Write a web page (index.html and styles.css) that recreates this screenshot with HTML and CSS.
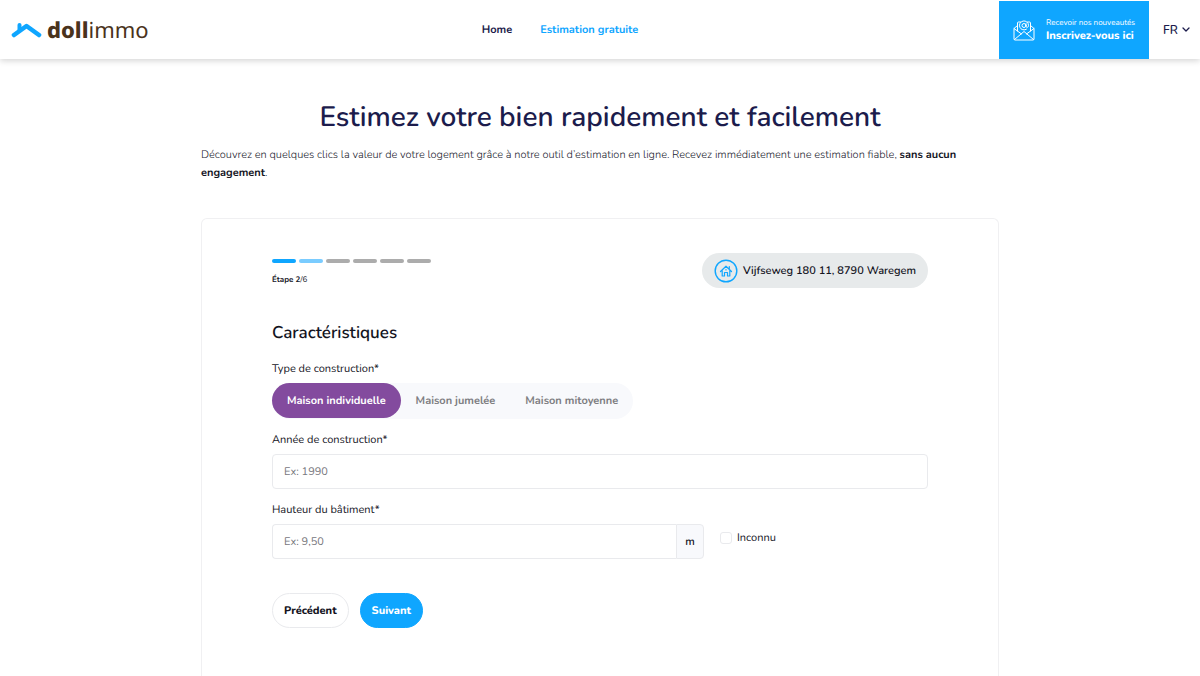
FILE: index.html
```html
<!DOCTYPE html>
<html lang="fr">
<head>
<meta charset="utf-8">
<meta name="viewport" content="width=device-width, initial-scale=1">
<title>Dollimmo – Estimation gratuite</title>
<link rel="stylesheet" href="styles.css">
</head>
<body>
<header class="header">
  <a class="logo" href="#" aria-label="dollimmo">
    <svg class="logo-mark" viewBox="0 0 32 18" aria-hidden="true"><path d="M3 14 15.500 5 28 14" fill="none" stroke="#0fa6ff" stroke-width="4.600" stroke-linecap="round" stroke-linejoin="round"/><path d="M6.500 10V4Q6.500 2 8.500 2Q10.500 2 10.500 4V8Z" fill="#0fa6ff"/></svg>
    <span class="logo-text"><b>doll</b>immo</span>
  </a>
  <nav class="nav">
    <a class="nav-link" href="#">Home</a>
    <a class="nav-link nav-link-active" href="#">Estimation gratuite</a>
  </nav>
  <div class="header-end">
    <a class="newsletter" href="#">
      <svg class="newsletter-icon" viewBox="0 0 22 22" aria-hidden="true" fill="none" stroke="#fff" stroke-width="1" stroke-linecap="round" stroke-linejoin="round"><path d="M4.500 6.500 1 9.500V20a1 1 0 0 0 1 1h18a1 1 0 0 0 1-1V9.500l-3.500-3M4.500 12V4a1 1 0 0 1 1-1h2M17.500 12V4a1 1 0 0 0-1-1h-2M1 9.500l7.500 5.500M21 9.500 13.500 15M1.500 20.500 11 12.500l9.500 8"/><path d="M13.500 10.200A4.500 4.500 0 1 1 15.500 6.500c0 2.300-2.500 2.500-2.500.5V4.700"/><circle cx="11" cy="6.500" r="2"/></svg>
      <span class="newsletter-text"><span class="newsletter-small">Recevoir nos nouveautés</span><strong class="newsletter-strong">Inscrivez-vous ici</strong></span>
    </a>
    <div class="lang">
      <select class="lang-select" aria-label="Langue"><option>FR</option></select>
      <svg class="lang-chevron" viewBox="0 0 8 6" aria-hidden="true"><path d="m1 1 3 3 3-3" fill="none" stroke="#1c1c4c" stroke-width="1.300" stroke-linecap="round" stroke-linejoin="round"/></svg>
    </div>
  </div>
</header>
<main class="main">
  <h1 class="title">Estimez votre bien rapidement et facilement</h1>
  <p class="intro">Découvrez en quelques clics la valeur de votre logement grâce à notre outil d’estimation en ligne. Recevez immédiatement une estimation fiable, <strong class="intro-strong">sans aucun engagement</strong>.</p>
  <form class="card">
    <div class="card-top">
      <div class="progress">
        <div class="steps"><span class="step step-done"></span><span class="step step-current"></span><span class="step"></span><span class="step"></span><span class="step"></span><span class="step"></span></div>
        <div class="step-label"><b>Étape 2</b>/6</div>
      </div>
      <div class="address">
        <svg class="address-icon" viewBox="0 0 24 24" aria-hidden="true" fill="none" stroke="#0fa6ff" stroke-linecap="round" stroke-linejoin="round"><circle cx="12" cy="12" r="10.800" stroke-width="1.400"/><path d="M6.500 12.500 12 7.200l5.500 5.300M8.200 11.500v5.500h2.300v-3.500h3V17h2.300v-5.500M15.300 9.800V7.500M12 10.500v.5" stroke-width="1.200"/></svg>
        <span>Vijfseweg 180 11, 8790 Waregem</span>
      </div>
    </div>
    <h2 class="section-title">Caractéristiques</h2>
    <fieldset class="group">
      <legend class="label">Type de construction*</legend>
      <div class="segments">
        <label class="segment"><input class="segment-input" type="radio" name="type" checked><span class="segment-text">Maison individuelle</span></label>
        <label class="segment"><input class="segment-input" type="radio" name="type"><span class="segment-text">Maison jumelée</span></label>
        <label class="segment"><input class="segment-input" type="radio" name="type"><span class="segment-text">Maison mitoyenne</span></label>
      </div>
    </fieldset>
    <div class="field">
      <label class="label" for="annee">Année de construction*</label>
      <input class="input" id="annee" type="text" placeholder="Ex: 1990">
    </div>
    <div class="field">
      <label class="label" for="hauteur">Hauteur du bâtiment*</label>
      <div class="height-row">
        <div class="input-group"><input class="input input-joined" id="hauteur" type="text" placeholder="Ex: 9,50"><span class="unit">m</span></div>
        <label class="check"><input class="check-box" type="checkbox"><span>Inconnu</span></label>
      </div>
    </div>
    <div class="actions">
      <button class="button" type="button">Précédent</button>
      <button class="button button-primary" type="button">Suivant</button>
    </div>
  </form>
</main>
</body>
</html>
```
FILE: styles.css
```css
* { box-sizing: border-box; }

body {
  margin: 0;
  min-height: 100vh;
  display: flex;
  flex-direction: column;
  background: #fff;
  color: #14141e;
  font: 11px/18px Nunito, Lato, sans-serif;
  text-rendering: geometricPrecision;
}

a { text-decoration: none; }

.header {
  display: grid;
  grid-template-columns: 1fr auto 1fr;
  align-items: center;
  height: 59px;
  padding-top: 1px;
  background: #fff;
  box-shadow: 0 2px 6px rgba(0, 0, 0, 0.16);
}

.logo {
  display: flex;
  align-items: center;
  gap: 4px;
  padding-left: 11px;
  color: #4a331c;
}

.logo-mark { width: 32px; height: 18px; }

.logo-text {
  font: 22px/30px "Noto Sans", sans-serif;
}

.logo-text b { font-weight: 800; }

.nav { display: flex; gap: 28px; padding-right: 80px; }

.nav-link { color: #1c1c4c; font-weight: 700; }

.nav-link-active { color: #0fa6ff; }

.header-end { display: flex; justify-content: flex-end; align-self: stretch; }

.newsletter {
  display: flex;
  align-items: center;
  gap: 11px;
  padding: 0 14px;
  background: #0fa6ff;
  color: #fff;
}

.newsletter-icon { width: 22px; height: 22px; }

.newsletter-text { display: flex; flex-direction: column; padding-bottom: 2px; line-height: 13px; }

.newsletter-small { font-size: 8px; }

.newsletter-strong { font-size: 11px; font-weight: 800; }

.lang {
  display: flex;
  align-items: center;
  gap: 4px;
  padding: 0 10px 0 14px;
}

.lang-select {
  appearance: none;
  padding: 0;
  border: 0;
  background: transparent;
  color: #1c1c4c;
  font: inherit;
  font-size: 12px;
  font-weight: 600;
}

.lang-chevron { width: 8px; height: 6px; }

.main {
  display: flex;
  flex: 1;
  flex-direction: column;
  width: 100%;
  max-width: 798px;
  margin: 0 auto;
  padding-top: 38px;
}

.title {
  margin: 0 0 9px;
  color: #1c1c4c;
  font-size: 28px;
  font-weight: 600;
  line-height: 40px;
  text-align: center;
}

.intro { margin: 0 0 36px; color: #20202c; font-weight: 300; }

.intro-strong { color: #14141e; font-weight: 700; }

.card {
  flex: 1;
  padding: 34px 70px 48px;
  border: 1px solid #f0f0f2;
  border-bottom: 0;
  border-radius: 6px 6px 0 0;
}

.card-top {
  display: flex;
  align-items: flex-start;
  justify-content: space-between;
}

.progress { padding-top: 6px; }

.steps { display: flex; gap: 3px; }

.step { width: 24px; height: 4px; border-radius: 2px; background: #acacac; }

.step-done { background: #0fa6ff; }

.step-current { background: #7accff; }

.step-label { margin-top: 8px; font-size: 8px; line-height: 18px; }

.address {
  display: flex;
  align-items: center;
  gap: 5px;
  height: 35px;
  padding: 0 12px;
  border-radius: 18px;
  background: #e7eaeb;
  font-weight: 600;
}

.address-icon { width: 24px; height: 24px; }

.section-title {
  margin: 32px 0 13px;
  font-size: 17px;
  font-weight: 600;
  line-height: 26px;
}

.group { margin: 0 0 12px; padding: 0; border: 0; }

.label { display: block; margin-bottom: 5px; padding: 0; line-height: 18px; }

.segments {
  display: inline-flex;
  height: 36px;
  padding-bottom: 1px;
  border-radius: 18px;
  background: #f8f9fc;
  vertical-align: top;
}

.segment { display: flex; position: relative; }

.segment-input { position: absolute; margin: 0; opacity: 0; }

.segment-text {
  display: flex;
  align-items: center;
  padding: 0 15px;
  border-radius: 18px;
  color: #7e7e82;
  font-weight: 700;
}

.segment-input:checked + .segment-text { background: #834b9e; color: #fff; }

.field { margin-bottom: 12px; }

.input {
  display: block;
  width: 100%;
  height: 35px;
  padding: 0 11px;
  border: 1px solid #e9eaed;
  border-radius: 4px;
  background: #fff;
  font: inherit;
  text-rendering: inherit;
}

.input::placeholder { color: #77777d; }

.height-row { display: grid; grid-template-columns: 432px auto; gap: 16px; justify-content: start; }

.input-group { display: flex; }

.input-joined { flex: 1; border-right: 0; border-radius: 4px 0 0 4px; }

.unit {
  display: flex;
  align-items: center;
  justify-content: center;
  width: 28px;
  border: 1px solid #e9eaed;
  border-radius: 0 4px 4px 0;
  background: #f8f9fc;
  font-weight: 600;
}

.check { display: flex; align-items: center; gap: 5px; height: 28px; }

.check-box {
  appearance: none;
  width: 12px;
  height: 12px;
  margin: 0;
  border: 1px solid #e9eaed;
  border-radius: 3px;
  background: #fff;
}

.check-box:checked { background: #0fa6ff; }

.actions { display: flex; gap: 11px; padding-top: 22px; }

.button {
  height: 35px;
  padding: 0 11px;
  border: 1px solid #e9eaed;
  border-radius: 18px;
  background: #fff;
  color: #14141e;
  font: inherit;
  font-weight: 800;
  text-rendering: inherit;
}

.button-primary { border-color: #0fa6ff; background: #0fa6ff; color: #fff; }
```
